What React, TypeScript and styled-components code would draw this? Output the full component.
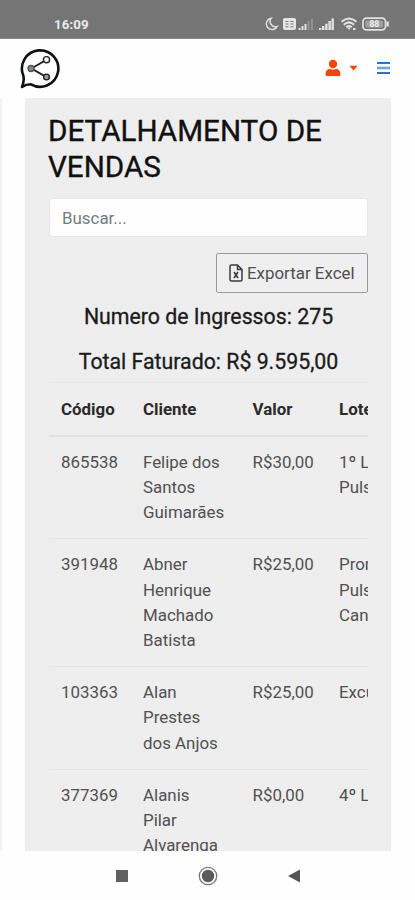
import React from 'react';
import styled, { createGlobalStyle } from 'styled-components';

const GlobalStyle = createGlobalStyle`
  * { box-sizing: border-box; }
  body { margin: 0; background: #fefefe; font-family: Roboto, "Liberation Sans", sans-serif; }
`;

const Screen = styled.div`
  display: flex;
  flex-direction: column;
  width: 415px;
  height: 900px;
  overflow: hidden;
  background: #fefefe;
`;

const StatusBar = styled.div`
  display: flex;
  flex: 0 0 39px;
  align-items: center;
  justify-content: space-between;
  padding: 10px 26px 0 54px;
  background: #757575;
  border-bottom: 1px solid #858585;
`;

const Clock = styled.span`
  padding-top: 2px;
  font-size: 13.3px;
  line-height: 16px;
  font-weight: 700;
  letter-spacing: 0.1px;
  color: #eaeaea;
`;

const Header = styled.header`
  display: flex;
  flex: 0 0 59px;
  align-items: center;
  padding: 0 25px 2px 18px;
`;

const UserMenu = styled.div`
  display: flex;
  align-items: center;
  gap: 8px;
  margin: 0 19px 0 auto;
`;

const Body = styled.main`
  display: flex;
  flex: 0 0 753px;
  overflow: hidden;
  padding-right: 24px;
`;

const SideEdge = styled.div`
  width: 2px;
  margin-right: 23px;
  background: #f3f3f3;
`;

const Panel = styled.section`
  flex: 1;
  min-width: 0;
  padding: 15px 23px 0 24px;
  background: #eeeeee;
`;

const Title = styled.h1`
  margin: 0 0 0 -1px;
  font-size: 29.65px;
  line-height: 35.5px;
  font-weight: 400;
  -webkit-text-stroke: 0.35px #111;
  color: #111;
`;

const Search = styled.input`
  display: block;
  width: 100%;
  height: 39px;
  margin-top: 14px;
  padding: 0 12px;
  border: 1px solid #e6e9eb;
  border-radius: 3px;
  background: #fefefe;
  font: 400 16.9px Roboto, "Liberation Sans", sans-serif;
  outline: none;
  &::placeholder { color: #757b80; opacity: 1; }
`;

const ExportButton = styled.button`
  display: flex;
  align-items: center;
  gap: 4px;
  width: 152px;
  height: 40px;
  margin: 16px 0 0 auto;
  padding: 0 0 0 12px;
  border: 1px solid #999;
  border-radius: 2px;
  background: #efefef;
  color: #505050;
  font: 400 16.9px Roboto, "Liberation Sans", sans-serif;
  white-space: nowrap;
`;

const Total = styled.h2`
  margin: 0;
  height: 44.5px;
  font-size: 21.3px;
  line-height: 47px;
  font-weight: 400;
  -webkit-text-stroke: 0.3px #1b1b1b;
  text-align: center;
  color: #1b1b1b;
`;

const Table = styled.div`
  overflow: hidden;
  font-size: 16.9px;
  line-height: 25.4px;
`;

const Row = styled.div<{ $head?: boolean }>`
  display: grid;
  grid-template-columns: 82px 109.5px 86.5px 130px;
  width: 408px;
  padding-top: ${p => (p.$head ? '13.5px' : '12.8px')};
  padding-bottom: ${p => (p.$head ? '12.9px' : '12.5px')};
  border-top: ${p => (p.$head ? '1px solid #e6e7e8' : '0')};
  border-bottom: ${p => (p.$head ? '2px solid #e0e2e3' : '1px solid #e3e4e5')};
  font-weight: ${p => (p.$head ? 700 : 400)};
  color: ${p => (p.$head ? '#2b2b2b' : '#515151')};
`;

const Cell = styled.div`
  padding-left: 12px;
  white-space: pre;
`;

const NavBar = styled.nav`
  display: grid;
  grid-template-columns: 22px 22px 22px;
  column-gap: 64px;
  flex: 0 0 49px;
  align-items: center;
  justify-items: center;
  padding-left: 110.5px;
  background: #fefefe;
`;

const StatusIcons = () => (
  <svg width="124" height="20" viewBox="0 0 124 20" fill="#e4e4e4">
    <path d="M6.2 4.2A5.7 5.7 0 1 0 12.2 12.4 5.3 5.3 0 0 1 6.2 4.2Z" fill="none" stroke="#dedede" strokeWidth="1.5" />
    <rect x="18" y="4" width="13" height="12" rx="2" />
    <path d="M20.500 7.5h3M25.500 7.5h3M20.500 10h3M25.500 10h3M20.500 12.7h3M25.500 12.7h3" stroke="#777" strokeWidth="1.1" />
    <path d="M33.500 14h2v2h-2zM36.500 12h2v4h-2zM39.500 10h2v6h-2z" />
    <path d="M42.500 7h2v9h-2zM46 5h2v11h-2z" fill="#949494" />
    <path d="M54 14h2.300v2h-2.300zM57 12h2.400v4h-2.400zM60.200 9.800h2.400V16h-2.400zM63.400 7h2.400v9h-2.400zM66.500 4.500h2.400V16h-2.400z" />
    <g fill="none" stroke="#e2e2e2" strokeWidth="2">
      <path d="M76.500 7.800q7.500-6.500 15 0M78.800 10.700q5.200-4.600 10.400 0M81.200 13.200q2.800-2.400 5.600 0" />
      <rect x="98" y="4.200" width="22.500" height="11.600" rx="3.500" strokeWidth="1.700" />
    </g>
    <path d="M82 13.500h4L84 16zM88 14h2.500v2h-2.500zM121.500 7.500h2.300v5h-2.300z" />
    <rect x="100.500" y="6.500" width="17.500" height="7" rx="1.500" fill="#a2a2a2" />
    <text x="109.300" y="13.200" textAnchor="middle" fontSize="8.500" fontWeight="700" fill="#eee">88</text>
  </svg>
);

const Logo = () => (
  <svg width="44" height="44" viewBox="0 0 44 44" fill="none">
    <path d="M5.300 29.500A18.200 18.200 0 1 1 13 38.300C10 38.300 7 38.900 4 41 5.500 37.300 6.300 33.500 5.300 29.500Z" stroke="#101010" strokeWidth="2.600" strokeLinejoin="round" />
    <path d="M13.500 22.500 28 14M13.500 22.500 28 30.800" stroke="#222" strokeWidth="2" />
    <circle cx="13" cy="22.500" r="3" fill="#7f8989" stroke="#4a5252" strokeWidth="1.300" />
    <circle cx="28.500" cy="13.700" r="3.100" fill="#f4f4f4" stroke="#222" strokeWidth="1.400" />
    <circle cx="28.500" cy="31" r="2.900" fill="#999" stroke="#222" strokeWidth="1.400" />
  </svg>
);

const FileIcon = () => (
  <svg width="14" height="18" viewBox="0 0 14 18" fill="none" stroke="#3c3c3c" strokeWidth="1.500">
    <path d="M2.500 1h6L13 5.500V15.500Q13 17 11.500 17h-9Q1 17 1 15.500v-13Q1 1 2.500 1ZM8.500 1v4.500H13" />
    <path d="m5 8 4 6M9 8l-4 6" strokeWidth="1.600" />
  </svg>
);

const sales = [
  ['865538', 'Felipe dos\nSantos\nGuimarães', 'R$30,00', '1º Lote\nPulseira'],
  ['391948', 'Abner\nHenrique\nMachado\nBatista', 'R$25,00', 'Promo\nPulseira\nCanal'],
  ['103363', 'Alan\nPrestes\ndos Anjos', 'R$25,00', 'Excursão'],
  ['377369', 'Alanis\nPilar\nAlvarenga', 'R$0,00', '4º Lote'],
];

export default function App() {
  return (
    <Screen>
      <GlobalStyle />
      <StatusBar>
        <Clock>16:09</Clock>
        <StatusIcons />
      </StatusBar>
      <Header>
        <Logo />
        <UserMenu>
          <svg width="16" height="18" viewBox="0 0 16 18" fill="#f4450f">
            <circle cx="8" cy="5" r="4.200" />
            <path d="M.5 15.500C.5 11.500 2.500 10 5 10q3 1 6 0c2.500 0 4.500 1.500 4.500 5.500q0 1.500-1.500 1.500H2Q.5 17 .5 15.500Z" />
          </svg>
          <svg width="9" height="6" viewBox="0 0 9 6"><path d="M.3.800h8.400L4.500 5.500Z" fill="#f4450f" /></svg>
        </UserMenu>
        <svg width="13" height="14" viewBox="0 0 13 14">
          <path d="M0 2h13M0 12h13" stroke="#1d74e8" strokeWidth="2.200" />
          <path d="M0 7h13" stroke="#6aa4f3" strokeWidth="2.600" />
        </svg>
      </Header>
      <Body>
        <SideEdge />
        <Panel>
          <Title>DETALHAMENTO DE VENDAS</Title>
          <Search placeholder="Buscar..." />
          <ExportButton><FileIcon />Exportar Excel</ExportButton>
          <Total>Numero de Ingressos: 275</Total>
          <Total>Total Faturado: R$ 9.595,00</Total>
          <Table>
            <Row $head>
              {['Código', 'Cliente', 'Valor', 'Lote'].map(h => <Cell key={h}>{h}</Cell>)}
            </Row>
            {sales.map(sale => (
              <Row key={sale[0]}>
                {sale.map((value, i) => <Cell key={i}>{value}</Cell>)}
              </Row>
            ))}
          </Table>
        </Panel>
      </Body>
      <NavBar>
        <svg width="12" height="12"><rect width="12" height="12" fill="#606060" /></svg>
        <svg width="20" height="20" viewBox="0 0 20 20">
          <circle cx="10" cy="10" r="8.700" fill="none" stroke="#777" strokeWidth="1.300" />
          <circle cx="10" cy="10" r="6.200" fill="#5c5c5c" />
        </svg>
        <svg width="12" height="14"><path d="M0 7 12 .5v13Z" fill="#555" /></svg>
      </NavBar>
    </Screen>
  );
}
